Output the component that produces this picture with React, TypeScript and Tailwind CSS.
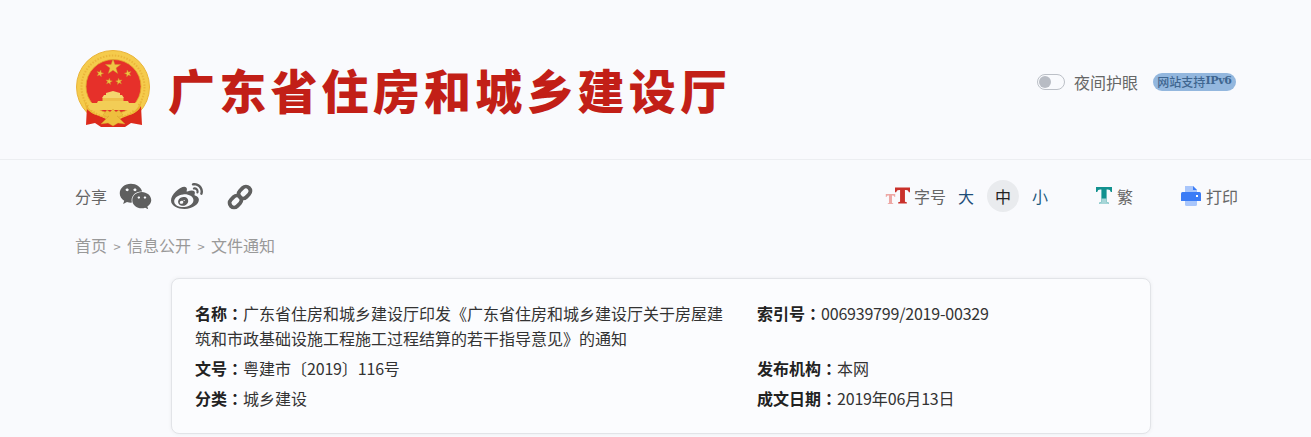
import React from "react";
import { FaWeixin, FaWeibo } from "react-icons/fa";

const CJK = { fontFamily: '"Noto Sans CJK SC", sans-serif' };

function Star({ cx, cy, r, rot = 0 }: { cx: number; cy: number; r: number; rot?: number }) {
  const pts: string[] = [];
  for (let i = 0; i < 10; i++) {
    const rad = i % 2 === 0 ? r : r * 0.4;
    const a = (-90 + rot + i * 36) * (Math.PI / 180);
    pts.push(`${(cx + rad * Math.cos(a)).toFixed(2)},${(cy + rad * Math.sin(a)).toFixed(2)}`);
  }
  return <polygon points={pts.join(" ")} fill="#f0c544" stroke="#c89a2c" strokeWidth="0.4" />;
}

function Emblem() {
  return (
    <svg width="76" height="78" viewBox="0 0 76 78" className="shrink-0">
      <ellipse cx="38" cy="37" rx="36.5" ry="36.5" fill="#f5cb4c" stroke="#eab43a" strokeWidth="1" />
      <ellipse cx="38" cy="37" rx="31.5" ry="31.5" fill="none" stroke="#ebb53a" strokeWidth="2" strokeDasharray="1.5 1.5" />
      <ellipse cx="38.5" cy="36.5" rx="27.5" ry="27" fill="#e6302a" stroke="#e2a42c" strokeWidth="0.8" />
      <Star cx={38} cy={17} r={8} />
      <Star cx={25} cy={23.5} r={3.6} rot={15} />
      <Star cx={53} cy={23.5} r={3.6} rot={-15} />
      <Star cx={34} cy={31.5} r={3.4} rot={10} />
      <Star cx={44} cy={31.5} r={3.4} rot={-10} />
      <path d="M27 48 L29 45 H31 V43 L38 41 L45 43 V45 H47 L49 48 Z" fill="#f4d76e" />
      <rect x="27.5" y="48" width="21" height="3" fill="#eec04a" />
      <path d="M23 51 H53 L54 53 H62 L65 60 H12 L15 53 H22 Z" fill="#f2cd56" />
      <path d="M12 56 L11 75 L20 73 L26 77 H50 L56 73 L67 75 L66 56 Q61 64 54 65 L38 72 L22 65 Q15 64 12 56 Z" fill="#dc2a1c" />
      <path d="M9 50 Q13 60 22 65 L38 68 L54 65 Q63 60 67 50 L65 58 Q58 67 38 68 Q18 67 11 58 Z" fill="#eab631" />
      <path d="M28 65 L32 60 L35 62 L38 59 L41 62 L44 60 L48 65 L44 67 L42 66 L50 74 L43 73 L38 76 L33 73 L26 74 L34 66 L32 67 Z" fill="#eebf3e" stroke="#d39a2a" strokeWidth="0.4" />
    </svg>
  );
}

function SerifT({ color, foot, className = "" }: { color: string; foot?: string; className?: string }) {
  return (
    <svg viewBox="0 0 16 17" className={className}>
      <path d="M0 0 H16 V5 H14.8 Q14.3 2.6 11.8 2.6 H10.6 V15.2 L12.6 15.6 V17 H3.4 V15.6 L5.4 15.2 V2.6 H4.2 Q1.7 2.6 1.2 5 H0 Z" fill={color} />
      {foot && <path d="M5.4 11.5 H10.6 V15.2 L12.6 15.6 V17 H3.4 V15.6 L5.4 15.2 Z" fill={foot} />}
    </svg>
  );
}

function Num({ children }: { children: React.ReactNode }) {
  return <span className="tracking-[-0.2px]">{children}</span>;
}

function Row({ label, children }: { label: string; children: React.ReactNode }) {
  return (
    <div className="leading-[25px]">
      <span className="font-bold text-[#222222]">{label}</span>
      <span className="font-bold text-[#222222]" style={{ fontFamily: '"Noto Sans CJK TC", sans-serif' }}>：</span>
      <span className="text-[#333333]">{children}</span>
    </div>
  );
}

function Sep() {
  return <span className="mx-[6px] inline-block w-[8px] text-center text-[13px]">&gt;</span>;
}

export default function App() {
  return (
    <div className="h-[437px] w-full overflow-hidden bg-[#f9fafd] text-[16px]" style={CJK}>
      <header className="flex h-[160px] items-center border-b border-[#eceef1] px-[75px] pt-[18px]">
        <div className="flex items-center gap-[17px]">
          <Emblem />
          <h1 className="text-[47px] font-black leading-none tracking-[4.2px] text-[#c21f17]">广东省住房和城乡建设厅</h1>
        </div>
        <div className="mb-[14px] ml-auto flex items-center">
          <span className="flex h-[16px] w-[28px] items-center rounded-full border border-[#bcc0c7] pl-[1px]">
            <span className="h-[12px] w-[12px] rounded-full bg-[#b8bcc4]" />
          </span>
          <span className="ml-[9px] text-[#666666]">夜间护眼</span>
          <span className="ml-[15px] flex h-[18px] w-[83px] items-center justify-center rounded-full bg-[#93b7de] text-[12px] font-medium text-[#3f6690]">
            网站支持
            <span style={{ fontFamily: '"DejaVu Serif", serif' }} className="text-[11px] font-bold tracking-[-0.3px]">IPv6</span>
          </span>
        </div>
      </header>

      <div className="flex h-[73px] items-center pl-[75px] pr-[73px]">
        <span className="-mt-[2px] text-[#666666]">分享</span>
        <FaWeixin className="ml-[12px] text-[#5f5f5f]" size={33} />
        <FaWeibo className="ml-[19px] text-[#5f5f5f]" size={32} />
        <svg viewBox="0 0 26 26" className="ml-[24px] h-[26px] w-[26px]" fill="none" stroke="#5f5f5f" strokeWidth="3.8">
          <rect x="-6.5" y="-4.5" width="13" height="9" rx="4.5" transform="translate(8.5 17.5) rotate(-45)" />
          <rect x="-6.5" y="-4.5" width="13" height="9" rx="4.5" transform="translate(17.5 8.5) rotate(-45)" />
        </svg>
        <div className="-mt-[2px] ml-auto flex items-center text-[#666666]">
          <span className="flex items-end">
            <SerifT color="#eda8a5" className="h-[10px] w-[11px]" />
            <SerifT color="#c9302a" className="-ml-[1px] h-[17px] w-[15px]" />
          </span>
          <span className="ml-[4px]">字号</span>
          <span className="ml-[12px] text-[#1f4e79]">大</span>
          <span className="ml-[13px] flex h-[32px] w-[32px] items-center justify-center rounded-full bg-[#e9ebee] text-[#222222]">中</span>
          <span className="ml-[13px] text-[#1f5a80]">小</span>
          <SerifT color="#12918f" foot="#a7d6d8" className="ml-[47px] h-[17px] w-[18px]" />
          <span className="ml-[4px]">繁</span>
          <svg viewBox="0 0 20 20" className="ml-[48px] h-[20px] w-[20px]">
            <path d="M4 0 H12 L16 4 V7 H4 Z" fill="#a9c6fb" />
            <path d="M12 0 L16 4 H12 Z" fill="#3b7cf6" />
            <path d="M1.5 6 H18.5 Q20 6 20 7.5 V15 H0 V7.5 Q0 6 1.5 6 Z" fill="#3b7cf6" />
            <rect x="15" y="9" width="2" height="2" fill="#ffffff" />
            <path d="M4 15 H16 V18.5 Q16 20 14.5 20 H5.5 Q4 20 4 18.5 Z" fill="#a9c6fb" />
          </svg>
          <span className="ml-[5px]">打印</span>
        </div>
      </div>

      <nav className="pl-[75px] leading-[24px] text-[#999999]">
        首页<Sep />信息公开<Sep />文件通知
      </nav>

      <section className="mx-[171px] mt-[19px] w-[980px] rounded-[8px] border border-[#e2e4e8] bg-[#fbfcfe] pb-[22px] pl-[23px] pr-[22px] pt-[22px] shadow-[0_0_4px_rgba(0,0,0,0.06)]">
        <div className="grid grid-cols-[529px_1fr] gap-x-[33px] gap-y-[5px]">
          <Row label="名称">广东省住房和城乡建设厅印发《广东省住房和城乡建设厅关于房屋建筑和市政基础设施工程施工过程结算的若干指导意见》的通知</Row>
          <Row label="索引号"><Num>006939799/2019-00329</Num></Row>
          <Row label="文号">粤建市〔<Num>2019</Num>〕<Num>116</Num>号</Row>
          <Row label="发布机构">本网</Row>
          <Row label="分类">城乡建设</Row>
          <Row label="成文日期"><Num>2019</Num>年<Num>06</Num>月<Num>13</Num>日</Row>
        </div>
      </section>
    </div>
  );
}
